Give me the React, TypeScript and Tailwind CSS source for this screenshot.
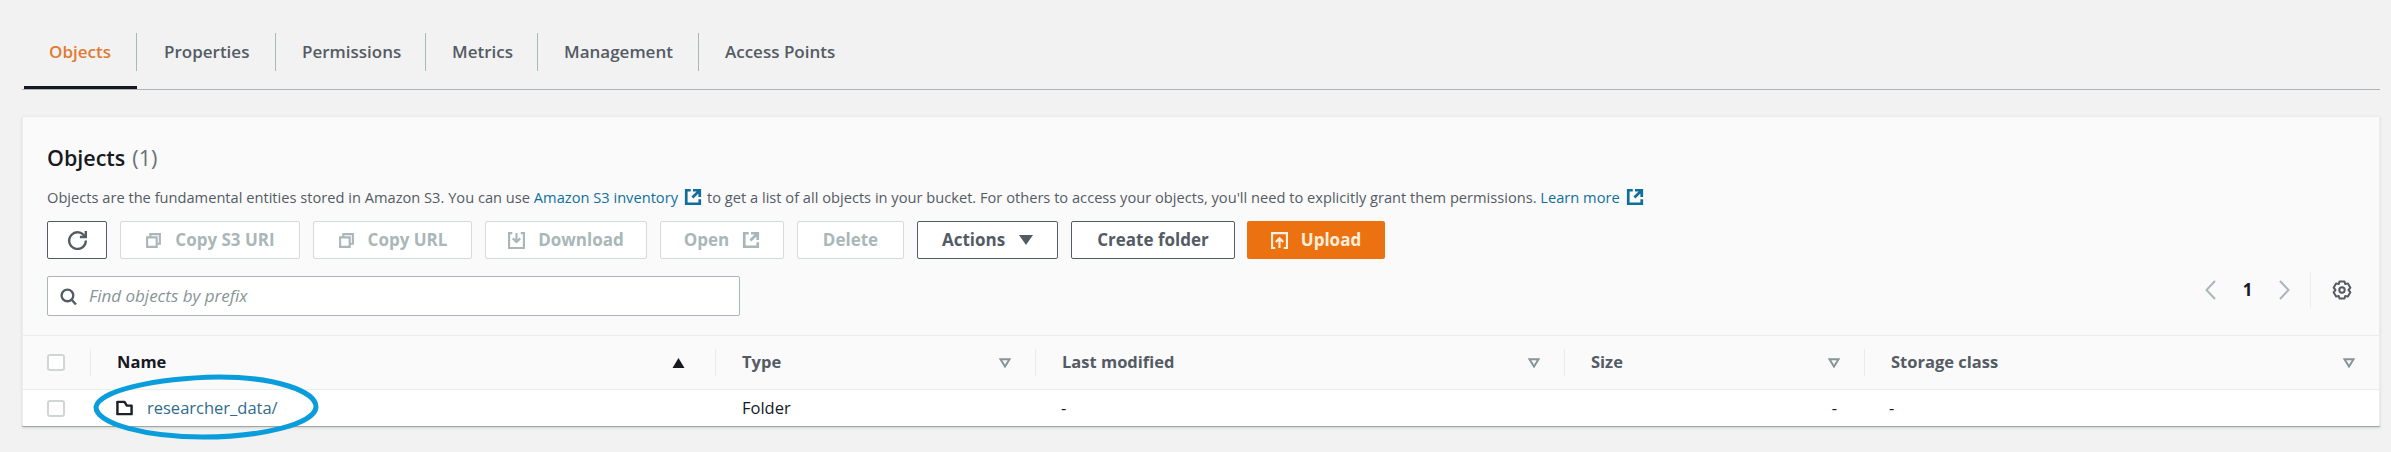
import React from "react";

const font = { fontFamily: '"Open Sans", "Noto Sans", sans-serif' };

type IconProps = { className?: string };
const Refresh = ({ className }: IconProps) => (
  <svg viewBox="0 0 16 16" fill="none" stroke="currentColor" strokeWidth="2" className={className}>
    <path d="M10 5h5V0" />
    <path d="M15 8a7 7 0 1 1-.7-3" />
  </svg>
);
const Copy = ({ className }: IconProps) => (
  <svg viewBox="0 0 16 16" fill="none" stroke="currentColor" strokeWidth="2" className={className}>
    <path d="M2 5h9v9H2z" />
    <path d="M5 5V2h9v9h-3" />
  </svg>
);
const Download = ({ className }: IconProps) => (
  <svg viewBox="0 0 16 16" fill="none" stroke="currentColor" strokeWidth="2" className={className}>
    <path d="M4 1H1v14h14V1h-3" />
    <path d="M8 1v8M4.5 6 8 9.5 11.5 6" />
  </svg>
);
const Upload = ({ className }: IconProps) => (
  <svg viewBox="0 0 16 16" fill="none" stroke="currentColor" strokeWidth="2" className={className}>
    <path d="M4 15H1V1h14v14h-3" />
    <path d="M8 15V6.5M4.5 9.5 8 6l3.5 3.5" />
  </svg>
);
const External = ({ className }: IconProps) => (
  <svg viewBox="0 0 16 16" fill="none" stroke="currentColor" strokeWidth="2.4" className={className}>
    <path d="M14 8V2H8M14 2 7.5 8.5M6 2H2v12h12v-4" />
  </svg>
);
const Search = ({ className }: IconProps) => (
  <svg viewBox="0 0 16 16" fill="none" stroke="currentColor" strokeWidth="2.2" className={className}>
    <circle cx="7" cy="7" r="5.5" />
    <path d="m11 11 4 4.5" />
  </svg>
);
const Folder = ({ className }: IconProps) => (
  <svg viewBox="0 0 18 16" fill="none" stroke="currentColor" strokeWidth="2.6" strokeLinejoin="round" className={className}>
    <path d="M1.5 1.5h7.500l2.500 4h5v9h-15z" />
  </svg>
);
const Gear = ({ className }: IconProps) => (
  <svg viewBox="0 0 20 20" fill="none" stroke="currentColor" strokeWidth="2" strokeLinejoin="round" className={className}>
    <path d="M7.5 1.5h5l.8 2.6 2.6-.7 2.5 4.3-1.9 2.3 1.9 2.3-2.5 4.3-2.6-.7-.8 2.6h-5l-.8-2.6-2.6.7-2.5-4.3L3.500 10 1.600 7.700l2.500-4.300 2.600.7z" />
    <circle cx="10" cy="10" r="2.700" />
  </svg>
);
const FilterCaret = ({ className }: IconProps) => (
  <svg viewBox="0 0 12 10" fill="none" stroke="#879596" strokeWidth="2" className={className}>
    <path d="M1.500 1.200h9L6 8.500z" />
  </svg>
);

function ToolButton({
  width,
  children,
  enabled,
}: {
  width: string;
  children: React.ReactNode;
  enabled?: boolean;
}) {
  return (
    <div
      className={`${width} h-[38px] shrink-0 flex items-center justify-center gap-[13px] bg-white rounded-[2px] border text-[17px] leading-5 font-bold whitespace-nowrap ${
        enabled ? "border-[#545b64] text-[#545b64]" : "border-[#d5dbdb] text-[#aab7b8]"
      }`}
    >
      {children}
    </div>
  );
}

const Tab = ({ label, className }: { label: string; className: string }) => (
  <div className={`flex items-center h-[38px] text-[17px] font-semibold text-[#545b64] whitespace-nowrap ${className}`}>
    {label}
  </div>
);

function HeaderCell({
  label,
  width,
  dark,
  children,
}: {
  label: string;
  width: string;
  dark?: boolean;
  children?: React.ReactNode;
}) {
  return (
    <div className={`${width} shrink-0 h-[27px] flex items-center justify-between pl-[26px] pr-[24px] border-l border-[#eaeded]`}>
      <span className={`text-[16.5px] font-bold ${dark ? "text-[#16191f]" : "text-[#545b64]"}`}>{label}</span>
      {children ?? <FilterCaret className="w-[12px] h-[10px]" />}
    </div>
  );
}

const Checkbox = () => (
  <div className="w-[18px] h-[17px] rounded-[3px] border-2 border-[#d0d5d5] bg-white" />
);

export default function App() {
  return (
    <div style={font} className="w-[2391px] h-[452px] bg-[#f2f2f2] pl-[22px] pr-[11px] pt-[33px] overflow-hidden">
      <div className="h-[57px] pl-[2px] border-b border-[#aab7b8]">
        <div className="flex h-[38px]">
          <div className="relative w-[113px] h-[56px]">
            <div className="flex items-center h-[38px] pl-[25px] border-r border-[#aab7b8] text-[17px] font-semibold text-[#e07b33]">
              Objects
            </div>
            <div className="absolute left-0 right-0 bottom-0 h-[3px] bg-[#16191f]" />
          </div>
          <Tab label="Properties" className="w-[139px] pl-[27px] border-r border-[#aab7b8]" />
          <Tab label="Permissions" className="w-[150px] pl-[26px] border-r border-[#aab7b8]" />
          <Tab label="Metrics" className="w-[112px] pl-[26px] border-r border-[#aab7b8]" />
          <Tab label="Management" className="w-[161px] pl-[26px] border-r border-[#aab7b8]" />
          <Tab label="Access Points" className="pl-[26px]" />
        </div>
      </div>

      <div className="mt-[26px] w-[2358px] h-[311px] bg-[#fafafa] border border-[#eaeded] border-b-[#9ea6a6] border-b-2 shadow-sm">
        <div className="h-[218px] pl-[24px] pr-[27px] pt-[27px]">
          <div className="h-[28px] flex items-center gap-[7px] text-[21.5px] leading-7">
            <span className="font-semibold text-[#16191f]">Objects</span>
            <span className="text-[#687078]">(1)</span>
          </div>
          <div className="mt-[15px] h-[20px] flex items-center text-[14.65px] leading-5 text-[#545b64] whitespace-nowrap">
            <span>Objects are the fundamental entities stored in Amazon S3. You can use&nbsp;</span>
            <span className="text-[#0f6f9c]">Amazon S3 inventory</span>
            <External className="w-[18px] h-[18px] ml-[6px] mr-[5px] text-[#0f6f9c]" />
            <span>to get a list of all objects in your bucket. For others to access your objects, you'll need to explicitly grant them permissions.&nbsp;</span>
            <span className="text-[#0f6f9c]">Learn more</span>
            <External className="w-[18px] h-[18px] ml-[6px] text-[#0f6f9c]" />
          </div>
          <div className="mt-[14px] flex gap-[13px]">
            <ToolButton width="w-[60px]" enabled>
              <Refresh className="w-[19px] h-[19px]" />
            </ToolButton>
            <ToolButton width="w-[180px]">
              <Copy className="w-[17px] h-[17px]" />
              Copy S3 URI
            </ToolButton>
            <ToolButton width="w-[159px]">
              <Copy className="w-[17px] h-[17px]" />
              Copy URL
            </ToolButton>
            <ToolButton width="w-[162px]">
              <Download className="w-[17px] h-[17px]" />
              Download
            </ToolButton>
            <ToolButton width="w-[124px]">
              Open
              <External className="w-[18px] h-[18px]" />
            </ToolButton>
            <ToolButton width="w-[107px]">Delete</ToolButton>
            <ToolButton width="w-[141px]" enabled>
              Actions
              <svg viewBox="0 0 14 10" className="w-[14px] h-[10px] ml-[1px] fill-current">
                <path d="M0 0h14L7 10z" />
              </svg>
            </ToolButton>
            <ToolButton width="w-[164px]" enabled>
              Create folder
            </ToolButton>
            <div className="w-[138px] -ml-[1px] h-[38px] flex items-center justify-center gap-[13px] bg-[#ec7211] rounded-[2px] text-[17px] font-bold text-[#ffefdd]">
              <Upload className="w-[17px] h-[17px]" />
              Upload
            </div>
          </div>
          <div className="mt-[17px] flex justify-between">
            <div className="w-[693px] h-[40px] flex items-center gap-[12px] pl-[12px] bg-white rounded-[2px] border border-[#aab7b8]">
              <Search className="w-[17px] h-[17px] text-[#545b64]" />
              <span className="text-[17px] italic text-[#879596]">Find objects by prefix</span>
            </div>
            <div className="-mt-[4px] h-[36px] flex items-center self-start text-[#16191f]">
              <svg viewBox="0 0 11 20" fill="none" stroke="#aab7b8" strokeWidth="2" className="w-[11px] h-[20px]">
                <path d="M10 1 1.500 10 10 19" />
              </svg>
              <span className="w-[63px] text-center text-[17px] font-bold">1</span>
              <svg viewBox="0 0 11 20" fill="none" stroke="#aab7b8" strokeWidth="2" className="w-[11px] h-[20px]">
                <path d="M1 1l8.500 9L1 19" />
              </svg>
              <div className="ml-[20px] h-[36px] border-l border-[#eaeded]" />
              <Gear className="ml-[21px] w-[20px] h-[20px] text-[#545b64]" />
            </div>
          </div>
        </div>

        <div className="h-[55px] flex items-center border-t border-b border-[#eaeded]">
          <div className="w-[67px] shrink-0 pl-[24px]">
            <Checkbox />
          </div>
          <HeaderCell label="Name" width="w-[625px]" dark>
            <svg viewBox="0 0 12 10" className="w-[13px] h-[10px] mr-[6px] fill-[#16191f]">
              <path d="M6 0l6 10H0z" />
            </svg>
          </HeaderCell>
          <HeaderCell label="Type" width="w-[320px]" />
          <HeaderCell label="Last modified" width="w-[529px]" />
          <HeaderCell label="Size" width="w-[300px]" />
          <HeaderCell label="Storage class" width="w-[515px]" />
        </div>

        <div className="relative h-[36px] flex items-center bg-white text-[16.5px] text-[#16191f]">
          <div className="w-[93px] shrink-0 pl-[24px]">
            <Checkbox />
          </div>
          <div className="w-[626px] shrink-0 flex items-center gap-[14px]">
            <Folder className="w-[17px] h-[16px] text-[#1d2127]" />
            <span className="text-[#2f6c8c]">researcher_data/</span>
          </div>
          <div className="w-[319px] shrink-0">Folder</div>
          <div className="w-[528px] shrink-0">-</div>
          <div className="w-[248px] shrink-0 text-right">-</div>
          <div className="ml-[52px]">-</div>
          <svg viewBox="0 0 226 66" fill="none" stroke="#0a9ddb" strokeWidth="5" className="absolute left-[70px] -top-[16px] w-[226px] h-[66px]">
            <path d="M3 33C5 17 62 4 126 3 182 3 223 17 223 33 222 50 168 63 110 63 54 63 3 50 3 33Z" />
          </svg>
        </div>
      </div>
    </div>
  );
}
